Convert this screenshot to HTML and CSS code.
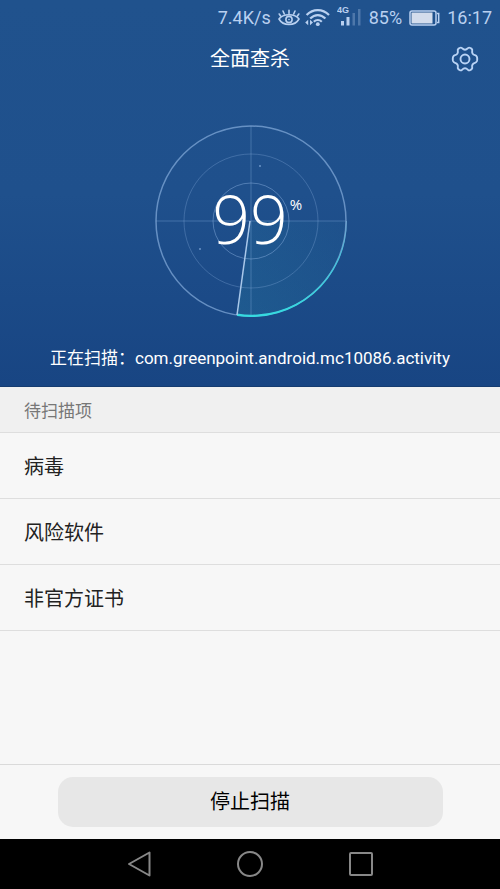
FILE: index.html
```html
<!DOCTYPE html>
<html lang="zh-CN">
<head>
<meta charset="utf-8">
<meta name="viewport" content="width=device-width, initial-scale=1">
<title>全面查杀</title>
<link rel="stylesheet" href="styles.css">
</head>
<body>
<div class="app">
  <header class="hero">
    <div class="status">
      <span class="status-text">7.4K/s</span>
      <div class="status-icons">
        <svg width="22" height="20" viewBox="0 0 22 20" fill="none" stroke="currentColor" stroke-width="1.6" stroke-linecap="round">
          <path d="M1 11C5 5.300 17 5.300 21 11C17 18.300 5 18.300 1 11Z"/>
          <circle cx="11" cy="11.500" r="3.100"/><circle cx="11" cy="11.500" r=".8" fill="currentColor" stroke="none"/>
          <path d="M11 5.500V2.200M6.300 6L5 3M15.700 6L17 3M2.600 8L1.200 6M19.400 8l1.400-2"/>
        </svg>
        <svg width="26" height="20" viewBox="0 0 26 20" fill="none" stroke="currentColor" stroke-width="2.200">
          <path d="M2.600 7C9 .4 18.600 .4 25 7M6.200 10.600c4.600-4.700 10.600-4.700 15.200 0M9.800 13.800c2.400-2.400 5.600-2.400 8 0"/>
          <circle cx="13.800" cy="16.200" r="1.900" fill="currentColor" stroke="none"/>
          <path d="M4.200 11.800v5.400L1.200 14.500zM6 11.800v5.400L9 14.500z" fill="currentColor" stroke="none"/>
        </svg>
      </div>
      <svg width="25" height="24" viewBox="0 0 25 24" fill="currentColor">
        <text class="net" x="0" y="7">4G</text>
        <path d="M4 15h3v4.500H4zM9.500 11h3v8.500h-3z"/>
        <path d="M15.500 7h2.500v12.500h-2.500zM21 3h2.500v16.500H21z" opacity=".3"/>
      </svg>
      <span class="status-text">85%</span>
      <svg width="31" height="16" viewBox="0 0 31 16">
        <rect x="1" y="1" width="26" height="14" rx="2" fill="none" stroke="currentColor" stroke-width="1.500"/>
        <path d="M28 3.500h1.700v9H28" fill="none" stroke="currentColor" stroke-width="1.500"/>
        <rect class="charge" x="2.500" y="2.500" width="21" height="11"/>
      </svg>
      <span class="status-text">16:17</span>
    </div>
    <div class="titlebar">
      <h1>全面查杀</h1>
      <button class="settings" type="button" aria-label="设置">
        <svg width="28" height="28" viewBox="0 0 28 28" fill="none" stroke="currentColor" stroke-width="1.900" stroke-linejoin="round">
          <path d="M11 3.200Q14 6.200 17 3.200Q18 2.200 19.400 3L20.400 3.600Q21.600 4.600 21.200 6Q20.600 9.200 24 10.200Q25.400 10.600 26 12Q26.500 14 26 16Q25.400 17.400 24 17.800Q20.600 18.800 21.200 22Q21.600 23.400 20.400 24.400L19.400 25Q18 25.800 17 24.800Q14 21.800 11 24.800Q10 25.800 8.600 25L7.600 24.400Q6.400 23.400 6.800 22Q7.400 18.800 4 17.800Q2.600 17.400 2 16Q1.500 14 2 12Q2.600 10.600 4 10.200Q7.400 9.200 6.800 6Q6.400 4.600 7.600 3.600L8.600 3Q10 2.200 11 3.200Z"/>
          <circle cx="14" cy="14" r="4.500"/>
        </svg>
      </button>
    </div>
    <div class="radar">
      <svg width="194" height="194" viewBox="-98 -97 194 194" fill="none">
        <defs>
          <linearGradient id="sector" x1="1" y1="0" x2="0" y2="1">
            <stop offset="0" stop-color="#2a8aa8" stop-opacity=".05"/>
            <stop offset="1" stop-color="#2a8aa8" stop-opacity=".26"/>
          </linearGradient>
          <linearGradient id="edge" x1="0" y1="0" x2="0" y2="1">
            <stop offset="0" stop-color="#7db8e0" stop-opacity=".6"/>
            <stop offset=".4" stop-color="#43c3dc"/>
            <stop offset="1" stop-color="#36dbe0"/>
          </linearGradient>
        </defs>
        <path d="M0 0H95A95 95 0 0 1-14 94Z" fill="url(#sector)"/>
        <g stroke="#8db4e2">
          <circle r="95" stroke-width="1.500" opacity=".65"/>
          <circle r="67" opacity=".3"/>
          <circle r="38" opacity=".45"/>
          <path d="M-95 0H95M0-95V95" opacity=".35"/>
        </g>
        <path d="M96 0A96 96 0 0 1-14 95L-14 92.500A94 94 0 0 0 95 0Z" fill="url(#edge)"/>
        <path d="M-1 0L-14 94" stroke="#a9c8ea" stroke-width="1.500"/>
        <g fill="#8db4e2" opacity=".7"><circle cx="9" cy="-55" r="1"/><circle cx="-51" cy="28" r="1"/></g>
      </svg>
      <p class="percent">99<span class="unit">%</span></p>
    </div>
    <p class="scanning">正在扫描：com.greenpoint.android.mc10086.activity</p>
  </header>
  <main class="content">
    <h2>待扫描项</h2>
    <ul>
      <li>病毒</li>
      <li>风险软件</li>
      <li>非官方证书</li>
    </ul>
  </main>
  <footer class="actions"><button class="stop" type="button">停止扫描</button></footer>
  <nav class="navbar">
    <button type="button" aria-label="返回"><svg width="28" height="28" viewBox="0 0 28 28"><path d="M24.500 2.500V25.500L4 14Z"/></svg></button>
    <button type="button" aria-label="主页"><svg width="28" height="28" viewBox="0 0 28 28"><circle cx="14" cy="14" r="12"/></svg></button>
    <button type="button" aria-label="最近任务"><svg width="28" height="28" viewBox="0 0 28 28"><rect x="3" y="3" width="22" height="22" rx="1"/></svg></button>
  </nav>
</div>
</body>
</html>
```
FILE: styles.css
```css
* { box-sizing: border-box; }
body, h1, h2, p, ul { margin: 0; padding: 0; }
body {
  font-family: Roboto, "Noto Sans CJK SC", sans-serif;
  background: #f7f7f7;
}
button {
  font: inherit;
  color: inherit;
  border: 0;
  padding: 0;
  background: none;
  cursor: pointer;
}
svg { display: block; flex: none; }
.app {
  display: flex;
  flex-direction: column;
  min-height: 100vh;
}
.hero {
  background: linear-gradient(#20528d, #1f508c 50%, #184583);
  color: #fff;
  border-bottom: 1px solid #153c70;
}
.status {
  display: flex;
  align-items: center;
  justify-content: flex-end;
  gap: 7px;
  height: 35px;
  padding: 0 8px;
  color: #b9d0f0;
}
.status-icons {
  display: flex;
  gap: 4px;
}
.status-text { font-size: 18px; }
.net {
  font-family: "Liberation Sans", sans-serif;
  font-size: 9px;
  font-weight: 700;
}
.charge { fill: #d3dcec; }
.titlebar {
  display: grid;
  grid-template-columns: 1fr auto 1fr;
  align-items: center;
  height: 48px;
  padding: 0 21px;
}
.titlebar h1 {
  grid-column: 2;
  font-size: 20px;
  font-weight: 400;
  line-height: 28px;
}
.settings {
  justify-self: end;
  color: #b9d3f5;
}
.radar {
  display: grid;
  place-items: center;
  padding: 41px 0 24px;
}
.radar > * { grid-area: 1 / 1; }
.percent {
  position: relative;
  padding-bottom: 6px;
  font-family: "Open Sans", sans-serif;
  font-size: 66px;
  font-weight: 300;
  line-height: 80px;
}
.unit {
  position: absolute;
  left: 100%;
  top: 14px;
  margin-left: 2px;
  font-size: 15px;
  font-weight: 400;
  line-height: 24px;
}
.scanning {
  height: 44px;
  font-size: 17px;
  line-height: 32px;
  text-align: center;
}
.content { flex: 1; }
.content h2 {
  height: 46px;
  padding: 0 24px;
  background: #f0f0f0;
  border-bottom: 1px solid #dedede;
  color: #777;
  font-size: 17px;
  font-weight: 400;
  line-height: 48px;
}
.content ul { list-style: none; }
.content li {
  height: 66px;
  padding: 0 24px;
  border-bottom: 1px solid #dedede;
  color: #222;
  font-size: 20px;
  line-height: 68px;
}
.actions {
  display: flex;
  justify-content: center;
  padding: 12px 0;
  border-top: 1px solid #dadada;
}
.stop {
  width: 77%;
  height: 50px;
  padding-bottom: 4px;
  border-radius: 15px;
  background: #e7e7e7;
  color: #000;
  font-size: 20px;
}
.navbar {
  display: flex;
  justify-content: center;
  gap: 83px;
  padding: 11px 0;
  background: #000;
}
.navbar svg {
  fill: none;
  stroke: #888;
  stroke-width: 2;
  stroke-linejoin: round;
}
```
